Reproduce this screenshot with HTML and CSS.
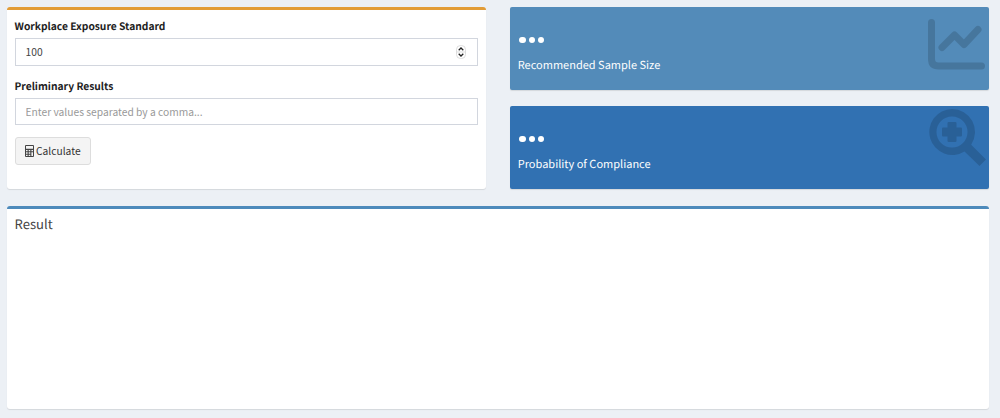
FILE: index.html
```html
<!DOCTYPE html>
<html lang="en">
<head>
  <meta charset="UTF-8">
  <meta name="viewport" content="width=device-width, initial-scale=1.0">
  <title>Sample Size Calculator</title>
  <link rel="stylesheet" href="styles.css">
</head>
<body>
  <div class="content">
    <div class="row">
      <div class="box box-warning">
        <form id="sampleForm">
          <div class="form-group">
            <label for="wes">Workplace Exposure Standard</label>
            <div class="number-input">
              <input type="text" inputmode="numeric" id="wes" value="100">
              <svg class="spinner" viewBox="0 0 10 14">
                <rect x="0.5" y="0.5" width="9" height="13" rx="4"/>
                <path class="divider" d="M0.5 7h9"/>
                <path class="arrow" d="M2.7 5.2L5 3l2.3 2.2M2.7 8.8L5 11l2.3-2.2"/>
              </svg>
            </div>
          </div>
          <div class="form-group">
            <label for="results">Preliminary Results</label>
            <input type="text" id="results" placeholder="Enter values separated by a comma...">
          </div>
          <button type="button" class="btn">
            <svg class="btn-icon" viewBox="0 0 9 12">
              <path fill-rule="evenodd" d="M1 0h7a1 1 0 0 1 1 1v10a1 1 0 0 1-1 1H1a1 1 0 0 1-1-1V1a1 1 0 0 1 1-1zM1 1v2.7h7V1zM1 4.9v1.4h1.6V4.9zM3.7 4.9v1.4h1.6V4.9zM6.4 4.9v1.4H8V4.9zM1 7.3v1.4h1.6V7.3zM3.7 7.3v1.4h1.6V7.3zM6.4 7.3V11H8V7.3zM1 9.7V11h1.6V9.7zM3.7 9.7V11h1.6V9.7z"/>
            </svg>
            <span>Calculate</span>
          </button>
        </form>
      </div>

      <div class="small-boxes">
        <div class="small-box bg-light-blue">
          <div class="dots"><i></i><i></i><i></i></div>
          <p>Recommended Sample Size</p>
          <svg class="icon icon-chart" viewBox="0 0 57 51">
            <path d="M3.5 3.5V40q0 7 7 7H53.5M14 28.5L26.5 16l9.5 9.500L50 10.500"/>
          </svg>
        </div>
        <div class="small-box bg-blue">
          <div class="dots"><i></i><i></i><i></i></div>
          <p>Probability of Compliance</p>
          <svg class="icon icon-search" viewBox="0 0 57 58">
            <path fill-rule="evenodd" d="M23 0a23 23 0 0 1 19.2 35.7L57 50.5 50.5 57 35.5 42.5A23 23 0 1 1 23 0zM23 7.5a15.5 15.5 0 1 0 0 31a15.5 15.5 0 1 0 0-31z"/>
            <path d="M19.5 13h7a1 1 0 0 1 1 1v4.5H32a1 1 0 0 1 1 1v7a1 1 0 0 1-1 1h-4.5V32a1 1 0 0 1-1 1h-7a1 1 0 0 1-1-1v-4.5H14a1 1 0 0 1-1-1v-7a1 1 0 0 1 1-1h4.5V14a1 1 0 0 1 1-1z"/>
          </svg>
        </div>
      </div>
    </div>

    <div class="box box-primary">
      <h3 class="box-title">Result</h3>
    </div>
  </div>
</body>
</html>
```

FILE: styles.css
```css
* {
  box-sizing: border-box;
}
body {
  margin: 0;
  background-color: #ecf0f5;
  font-family: "Noto Sans CJK SC", "Open Sans", sans-serif;
  font-size: 10.25px;
  line-height: 16px;
  color: #222;
  text-rendering: geometricPrecision;
}
.content {
  height: 418px;
  padding: 7px 11px 9.5px 6.5px;
  display: flex;
  flex-direction: column;
  gap: 17px;
}
.row {
  display: grid;
  grid-template-columns: 1fr 1fr;
  gap: 24px;
  height: 182px;
}
.box {
  background-color: #fff;
  border-top: 3px solid #d2d6de;
  border-radius: 3px;
  box-shadow: 0 1px 1px rgba(0, 0, 0, 0.1);
  padding: 8px;
}
.box-warning {
  border-top-color: #e29c36;
}
.box-primary {
  flex: 1;
  padding-top: 7px;
  border-top-color: #4d8abb;
}
.box-title {
  margin: 0;
  font-size: 13.1px;
  line-height: 16px;
  font-weight: normal;
  color: #444;
}
.form-group {
  margin-bottom: 12px;
}
.form-group label {
  display: block;
  margin-bottom: 4px;
  font-weight: bold;
}
.form-group input {
  display: block;
  width: 100%;
  height: 27.5px;
  padding: 0 10px;
  border: 1px solid #d2d6de;
  background-color: #fff;
  font: inherit;
  color: #444;
}
.form-group input::placeholder {
  color: #999;
}
.number-input {
  position: relative;
}
.spinner {
  position: absolute;
  top: 7px;
  right: 12px;
  width: 10px;
  height: 14px;
  fill: #fff;
  stroke: #ddd;
}
.spinner .arrow {
  fill: none;
  stroke: #222;
  stroke-width: 1.3;
}
.btn {
  display: flex;
  align-items: center;
  gap: 2px;
  height: 27.5px;
  padding: 0 9.5px;
  border: 1px solid #ddd;
  border-radius: 3px;
  background-color: #f4f4f4;
  font: inherit;
  color: #333;
}
.btn-icon {
  width: 9px;
  height: 12px;
  fill: #444;
}
.small-boxes {
  display: flex;
  flex-direction: column;
  justify-content: space-between;
}
.small-box {
  position: relative;
  height: 83px;
  padding: 30px 8px 0;
  border-radius: 2px;
  box-shadow: 0 1px 1px rgba(0, 0, 0, 0.1);
  font-size: 11px;
  color: #fff;
}
.small-box p {
  margin: 14px 0 0;
}
.bg-light-blue {
  background-color: #538bb9;
}
.bg-blue {
  background-color: #3171b2;
}
.dots {
  display: flex;
  gap: 3px;
  padding-left: 1.5px;
}
.dots i {
  width: 6.3px;
  height: 6.3px;
  border-radius: 50%;
  background-color: #fff;
}
.icon {
  position: absolute;
  right: 4px;
}
.icon-chart {
  top: 12px;
  width: 57px;
  height: 51px;
  fill: none;
  stroke: rgba(0, 0, 0, 0.15);
  stroke-width: 7;
  stroke-linecap: round;
  stroke-linejoin: round;
}
.icon-search {
  top: 3px;
  right: 3px;
  width: 57px;
  height: 58px;
  fill: rgba(0, 0, 0, 0.15);
}
```
